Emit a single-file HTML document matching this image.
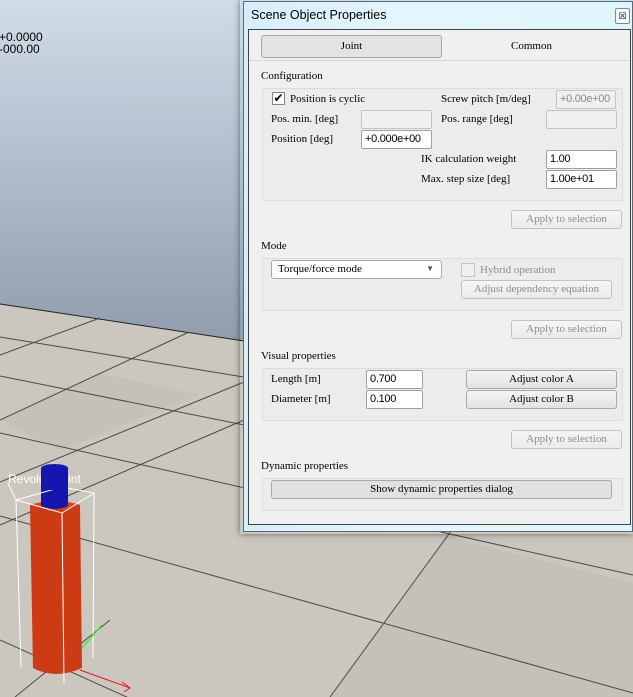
<!DOCTYPE html>
<html><head><meta charset="utf-8"><style>
*{margin:0;padding:0;box-sizing:border-box}
body{width:633px;height:697px;overflow:hidden;position:relative;font-family:"Liberation Serif",serif;font-size:11px;color:#000;background:#c9c5bd}
.a{position:absolute}
.t{position:absolute;white-space:nowrap;line-height:12px}
.in{position:absolute;background:#fff;border:1px solid #a0a0a0;border-radius:2px;font-family:"Liberation Sans",sans-serif;font-size:11px;padding:2px 0 0 3px;height:19px;letter-spacing:-0.3px}
.dis{background:#f0f0f0;border-color:#c4c4c4;color:#8a8a8a}
.btn{position:absolute;border:1px solid #a8a8a8;border-radius:3px;background:linear-gradient(#f4f4f4,#e2e2e2);text-align:center;line-height:16px;height:19px}
.bd{color:#8d8d8d;border-color:#c2c2c2;background:linear-gradient(#f5f5f5,#ebebeb)}
.grp{position:absolute;border:1px solid #dcdcdc;border-radius:2px;background:#ececec}
</style></head><body>
<svg class="a" style="left:0;top:0" width="633" height="697">
<defs><linearGradient id="sky" x1="0" y1="0" x2="0" y2="1"><stop offset="0" stop-color="#d0dce7"/><stop offset="1" stop-color="#8e9cac"/></linearGradient></defs>
<rect width="633" height="345" fill="url(#sky)"/>
<polygon points="0,304 633,400 633,697 0,697" fill="#cbc7bf"/>
<polygon points="0,420 100,373 200,395 60,450" fill="#bfbbb3" opacity=".5"/>
<polygon points="448,537 633,583 633,697 330,697" fill="#c0bcb4" opacity=".6"/>
<g stroke="#4a4a4a" stroke-width="1" fill="none">
<line x1="0" y1="304" x2="633" y2="400" stroke="#222"/>
<line x1="0" y1="337" x2="633" y2="441"/>
<line x1="0" y1="376" x2="633" y2="503"/>
<line x1="0" y1="433" x2="633" y2="575"/>
<line x1="0" y1="516" x2="633" y2="693"/>
<line x1="0" y1="640" x2="200" y2="730"/>
<line x1="0" y1="355" x2="100" y2="318"/>
<line x1="0" y1="420" x2="187" y2="333"/>
<line x1="0" y1="482" x2="244" y2="382"/>
<line x1="0" y1="525" x2="244" y2="420"/>
<line x1="330" y1="697" x2="470" y2="505"/>
<line x1="15" y1="697" x2="110" y2="620"/>
</g>
<path d="M30 505 Q55 497 80 505 L82 668 Q55 680 33 668 Z" fill="#cc3b14"/>
<path d="M30 505 Q55 497 80 505 Q55 514 30 505Z" fill="#d8471f"/>
<path d="M41 468 Q55 462 68 468 L68 506 Q55 512 41 506Z" fill="#1515b0"/>
<ellipse cx="54.5" cy="468" rx="13.5" ry="4" fill="#2020c0"/>
<g stroke="#fff" stroke-width="1" fill="none">
<polyline points="16,500 62,487 94,493 62,513 16,500"/>
<line x1="16" y1="500" x2="21" y2="668"/>
<line x1="62" y1="513" x2="64" y2="683"/>
<line x1="94" y1="493" x2="93" y2="658"/>
<line x1="8" y1="483" x2="16" y2="500"/>
</g>
<line x1="82" y1="648" x2="102" y2="625" stroke="#1f1"/>
<line x1="80" y1="670" x2="130" y2="688" stroke="#e11"/>
<polyline points="122,682 130,688 124,692" stroke="#e11" fill="none"/>
<text x="8" y="483" fill="#fff" font-family="Liberation Sans" font-size="12">Revolute joint</text>
<path d="M41 468 Q55 462 68 468 L68 490 L41 490Z" fill="#1515b0"/>
</svg>
<div class="t" style="left:-1px;top:31px;font-family:'Liberation Sans',sans-serif;font-size:12px">+0.0000<br>-000.00</div>

<div class="a" style="left:240px;top:0;width:393px;height:534px;box-shadow:0 0 6px rgba(0,0,0,.5)"></div>
<div class="a" style="left:243px;top:1px;width:390px;height:531px;border:1px solid #5a6a7a;background:linear-gradient(90deg,#d7eefa,#e4f6fd 40%,#dff5fc);"></div>
<div class="t" style="left:251px;top:9px;font-family:'Liberation Sans',sans-serif;font-size:12.5px">Scene Object Properties</div>
<div class="a" style="left:615px;top:8px;width:15px;height:16px;border:1px solid #7a8a98;border-radius:2px;background:#f4fbff;font-size:9px;text-align:center;line-height:14px;font-family:'Liberation Sans'">&#x2612;</div>
<div class="a" style="left:248px;top:29px;width:383px;height:496px;background:#f0f0f0;border:1px solid #444"></div>
<div class="a" style="left:249px;top:60px;width:381px;height:1px;background:#d8d8d8"></div>
<div class="btn" style="left:261px;top:35px;width:181px;height:23px;line-height:21px;background:#e3e3e3">Joint</div>
<div class="t" style="left:511px;top:40px">Common</div>

<div class="t" style="left:261px;top:70px">Configuration</div>
<div class="grp" style="left:262px;top:88px;width:361px;height:113px"></div>
<div class="a" style="left:272px;top:92px;width:13px;height:13px;border:1px solid #888;background:#fff;font-size:12px;line-height:11px;text-align:center;font-family:'DejaVu Sans'">✔</div>
<div class="t" style="left:290px;top:93px">Position is cyclic</div>
<div class="t" style="left:441px;top:93px">Screw pitch [m/deg]</div>
<div class="in dis" style="left:556px;top:90px;width:60px;color:#888">+0.00e+00</div>
<div class="t" style="left:271px;top:113px">Pos. min. [deg]</div>
<div class="in dis" style="left:361px;top:110px;width:71px"></div>
<div class="t" style="left:441px;top:113px">Pos. range [deg]</div>
<div class="in dis" style="left:546px;top:110px;width:71px"></div>
<div class="t" style="left:271px;top:133px">Position [deg]</div>
<div class="in" style="left:361px;top:130px;width:71px">+0.000e+00</div>
<div class="t" style="left:421px;top:153px">IK calculation weight</div>
<div class="in" style="left:546px;top:150px;width:71px">1.00</div>
<div class="t" style="left:421px;top:173px">Max. step size [deg]</div>
<div class="in" style="left:546px;top:170px;width:71px">1.00e+01</div>
<div class="btn bd" style="left:511px;top:210px;width:111px">Apply to selection</div>

<div class="t" style="left:261px;top:240px">Mode</div>
<div class="grp" style="left:262px;top:258px;width:361px;height:53px"></div>
<div class="btn" style="left:271px;top:260px;width:171px;text-align:left;padding-left:6px;background:#fff">Torque/force mode<span style="position:absolute;right:7px;top:0;font-size:8px;color:#555">▼</span></div>
<div class="a" style="left:461px;top:263px;width:14px;height:14px;border:1px solid #c4c4c4;background:#f0f0f0"></div>
<div class="t" style="left:480px;top:264px;color:#8d8d8d">Hybrid operation</div>
<div class="btn bd" style="left:461px;top:280px;width:151px">Adjust dependency equation</div>
<div class="btn bd" style="left:511px;top:320px;width:111px">Apply to selection</div>

<div class="t" style="left:261px;top:350px">Visual properties</div>
<div class="grp" style="left:262px;top:368px;width:361px;height:53px"></div>
<div class="t" style="left:271px;top:373px">Length [m]</div>
<div class="in" style="left:366px;top:370px;width:57px">0.700</div>
<div class="btn" style="left:466px;top:370px;width:151px">Adjust color A</div>
<div class="t" style="left:271px;top:393px">Diameter [m]</div>
<div class="in" style="left:366px;top:390px;width:57px">0.100</div>
<div class="btn" style="left:466px;top:390px;width:151px">Adjust color B</div>
<div class="btn bd" style="left:511px;top:430px;width:111px">Apply to selection</div>

<div class="t" style="left:261px;top:460px">Dynamic properties</div>
<div class="grp" style="left:262px;top:478px;width:361px;height:33px"></div>
<div class="btn" style="left:271px;top:480px;width:341px;background:#e1e1e1">Show dynamic properties dialog</div>
</body></html>
